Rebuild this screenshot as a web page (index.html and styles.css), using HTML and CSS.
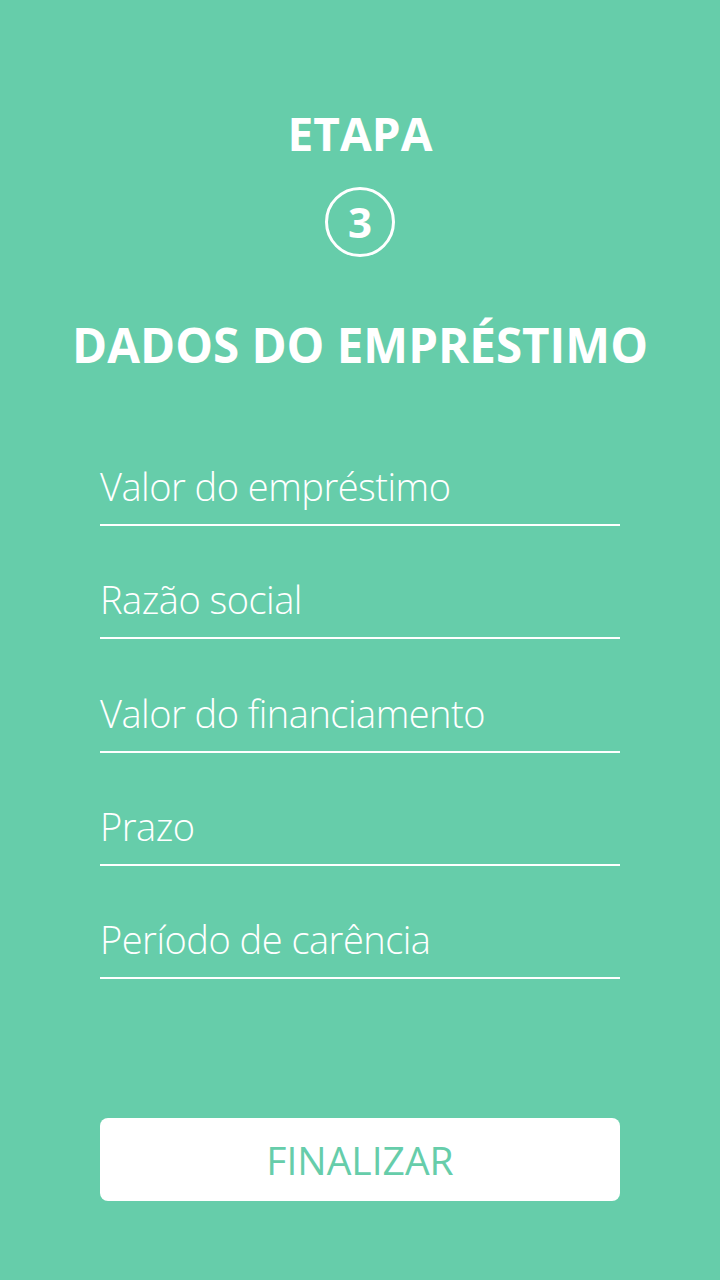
FILE: index.html
```html
<!DOCTYPE html>
<html lang="pt-BR">
<head>
<meta charset="utf-8">
<title>Etapa 3 - Dados do empréstimo</title>
<link rel="stylesheet" href="styles.css">
</head>
<body>
<main class="screen">
  <header class="step">
    <div class="step-label">ETAPA</div>
    <div class="step-number">3</div>
    <h1 class="step-title">DADOS DO EMPRÉSTIMO</h1>
  </header>
  <form class="form">
    <div class="field">Valor do empréstimo</div>
    <div class="field">Razão social</div>
    <div class="field">Valor do financiamento</div>
    <div class="field">Prazo</div>
    <div class="field">Período de carência</div>
    <button type="button" class="submit">FINALIZAR</button>
  </form>
</main>
</body>
</html>
```
FILE: styles.css
```css
html, body {
  margin: 0;
  padding: 0;
}
body {
  background: #66cdaa;
  font-family: "Open Sans", "Noto Sans", sans-serif;
  color: #ffffff;
}
.screen {
  width: 720px;
  height: 1280px;
  box-sizing: border-box;
  padding-top: 110px;
  display: flex;
  flex-direction: column;
  align-items: center;
}
.step {
  display: flex;
  flex-direction: column;
  align-items: center;
}
.step-label {
  font-size: 46px;
  line-height: 1;
  font-weight: 700;
}
.step-number {
  margin-top: 31px;
  width: 64px;
  height: 64px;
  border: 3px solid #ffffff;
  border-radius: 50%;
  display: flex;
  align-items: center;
  justify-content: center;
  font-size: 42px;
  font-weight: 700;
  line-height: 1;
}
.step-title {
  margin: 64px 0 0;
  font-size: 47.5px;
  line-height: 1;
  font-weight: 700;
}
.form {
  margin-top: 97.5px;
  width: 520px;
  display: flex;
  flex-direction: column;
  gap: 53.25px;
}
.field {
  font-size: 38px;
  line-height: 38px;
  font-weight: 300;
  letter-spacing: -0.5px;
  padding-top: 1px;
  padding-bottom: 19px;
  border-bottom: 2px solid #ffffff;
}
.submit {
  margin-top: 86px;
  height: 83px;
  border: none;
  border-radius: 8px;
  background: #ffffff;
  color: #66cdaa;
  font-family: "Open Sans", "Noto Sans", sans-serif;
  font-size: 39px;
  font-weight: 400;
  padding: 0;
}
```
